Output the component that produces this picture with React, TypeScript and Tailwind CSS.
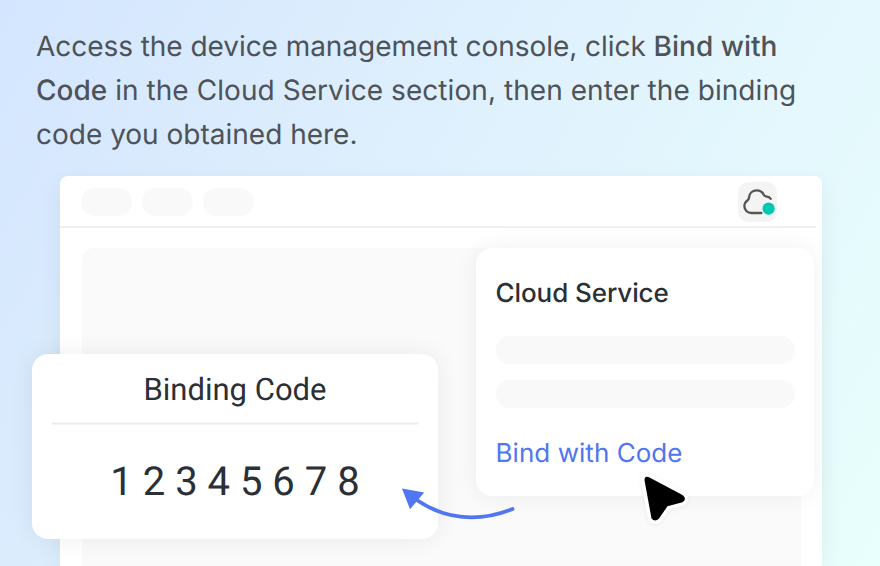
function WindowBar() {
  return (
    <div className="mr-1.5 flex h-[52px] items-center justify-between border-b-2 border-[#efefef] pr-[39px] pl-[21.4px]">
      <div className="mt-0.5 flex gap-2.5">
        <span className="h-7 w-[51px] rounded-[14px] bg-[#f9f9f9]" />
        <span className="h-7 w-[51px] rounded-[14px] bg-[#f9f9f9]" />
        <span className="h-7 w-[51px] rounded-[14px] bg-[#f9f9f9]" />
      </div>
      <div className="mt-0.5 flex h-10 w-[39px] items-center justify-center rounded-[10px] bg-[#f4f4f4]">
        <svg width="39" height="40" viewBox="0 0 39 40" fill="none">
          <path
            d="M23.4 31H13.5C9.3 31 6.4 28 6.4 24.2C6.4 21.5 7.7 19.6 9.6 18.2C10.8 17.3 10.9 16.8 11 15.6C11.3 11.3 14.6 8.4 18.8 8.4C22 8.4 24.6 10.2 25.9 13C26.4 14 26.8 14.2 28 14.4C30 14.7 31.8 15.2 32.7 16.8"
            stroke="#555"
            strokeWidth="2.3"
            strokeLinecap="round"
            strokeLinejoin="round"
          />
          <circle cx="30.6" cy="26.6" r="6.1" fill="#00c8b3" />
        </svg>
      </div>
    </div>
  );
}

function CloudServiceCard() {
  return (
    <section className="absolute top-[72px] left-[416px] flex h-[248px] w-[338px] flex-col rounded-2xl bg-white px-[19.5px] pt-[26px] shadow-[0_0_24px_rgba(0,0,0,0.06)]">
      <h2 className="text-[26px] leading-10 font-medium tracking-[-0.08px] whitespace-nowrap text-[#2b2f36]">Cloud Service</h2>
      <div className="mt-[22px] h-7 rounded-[14px] bg-[#f9f9f9]" />
      <div className="mt-4 h-7 rounded-[14px] bg-[#f9f9f9]" />
      <a className="mt-[26px] text-[26px] leading-10 tracking-[0.05px] whitespace-nowrap text-[#5076f0]">Bind with Code</a>
    </section>
  );
}

function BindingCodeCard() {
  return (
    <section className="absolute top-[354px] left-8 flex h-[185px] w-[406px] flex-col rounded-2xl bg-white px-5 text-center font-['Roboto',sans-serif] text-[#2b2f36] shadow-[0_0_24px_rgba(0,0,0,0.07)]">
      <h2 className="h-[69px] pt-4 text-[31px] leading-10 whitespace-nowrap">Binding Code</h2>
      <div className="h-px bg-[#ebebeb] shadow-[0_1px_0_#f5f5f5,0_-1px_0_#f7f7f7]" />
      <p className="pt-8 text-[40px] leading-[52px] whitespace-nowrap">1 2 3 4 5 6 7 8</p>
    </section>
  );
}

export default function App() {
  return (
    <main className="relative flex h-[566px] w-[880px] flex-col overflow-hidden bg-[linear-gradient(120deg,#d4e6ff_0%,#daebfd_23%,#dff1fd_45%,#e4f8fd_72%,#e8fffc_100%)] font-['Inter',sans-serif] [text-rendering:geometricPrecision]">
      <p className="h-44 pt-6 pl-9 text-[28px] leading-[44px] whitespace-nowrap text-[#4e5359]">
        <span className="tracking-[-0.05px]">Access the device management console, click </span>
        <span className="font-medium">Bind with</span>
        <br />
        <span className="font-medium">Code</span>
        <span className="tracking-[0.06px]"> in the Cloud Service section, then enter the binding</span>
        <br />
        code you obtained here.
      </p>
      <div className="relative ml-[60px] flex h-[390px] w-[762px] flex-col rounded-t-lg bg-white shadow-[0_8px_24px_rgba(0,0,0,0.06)]">
        <WindowBar />
        <div className="mt-5 mr-[21px] ml-[21.5px] flex-1 rounded-t-xl bg-[#fafafa]" />
        <CloudServiceCard />
      </div>
      <BindingCodeCard />
      <svg className="absolute top-[480px] left-[396px]" width="126" height="46" viewBox="396 480 126 46" fill="none">
        <path d="M417.5 500.5C445 519 478 523 512.5 509" stroke="#5076f0" strokeWidth="3.8" strokeLinecap="round" />
        <path d="M402 488.4L424.2 492.5L410 509.2Z" fill="#5076f0" />
      </svg>
      <svg className="absolute top-[465px] left-[630px] drop-shadow-[0_1px_2px_rgba(0,0,0,0.06)]" width="70" height="70" viewBox="630 465 70 70">
        <path
          d="M644.5 480.3Q644.5 475.5 649.5 477.4L682.5 495.1Q687.5 499 682.5 502.2L667.5 506.2L659 518.5Q655 522.5 651.5 518.5Z"
          fill="#fff"
          stroke="#fff"
          strokeWidth="7"
          strokeLinejoin="round"
        />
        <path
          d="M644.5 480.3Q644.5 475.5 649.5 477.4L682.5 495.1Q687.5 499 682.5 502.2L667.5 506.2L659 518.5Q655 522.5 651.5 518.5Z"
          fill="#000"
        />
      </svg>
    </main>
  );
}
